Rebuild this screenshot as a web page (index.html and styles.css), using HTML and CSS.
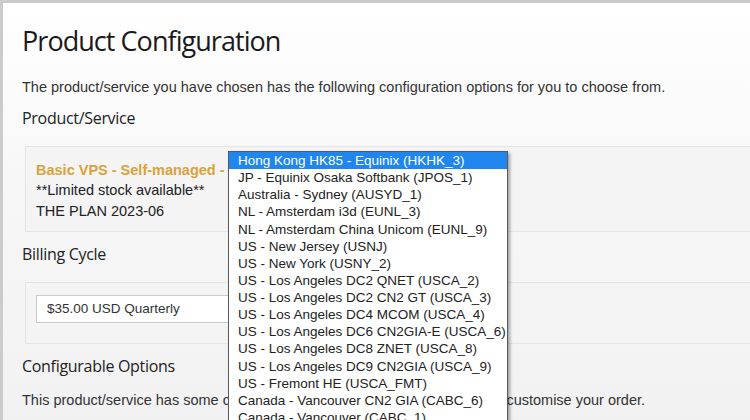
FILE: index.html
```html
<!DOCTYPE html>
<html>
<head>
<meta charset="utf-8">
<link rel="stylesheet" href="styles.css">
</head>
<body>
<div class="frame">
  <div class="content">
    <h1 class="title">Product Configuration</h1>
    <p class="intro">The product/service you have chosen has the following configuration options for you to choose from.</p>
    <h3 class="section">Product/Service</h3>
    <div class="well product">
      <div class="prod-name">Basic VPS - Self-managed - Hong Kong HK85</div>
      <div class="prod-line">**Limited stock available**</div>
      <div class="prod-line">THE PLAN 2023-06</div>
    </div>
    <h3 class="section section-next">Billing Cycle</h3>
    <div class="well billing">
      <div class="select">$35.00 USD Quarterly</div>
    </div>
    <h3 class="section section-next">Configurable Options</h3>
    <p class="intro intro-tight">This product/service has some configurable options that you can choose to customise your order.</p>
  </div>
  <ul class="dropdown">
    <li class="active">Hong Kong HK85 - Equinix (HKHK_3)</li>
    <li>JP - Equinix Osaka Softbank (JPOS_1)</li>
    <li>Australia - Sydney (AUSYD_1)</li>
    <li>NL - Amsterdam i3d (EUNL_3)</li>
    <li>NL - Amsterdam China Unicom (EUNL_9)</li>
    <li>US - New Jersey (USNJ)</li>
    <li>US - New York (USNY_2)</li>
    <li>US - Los Angeles DC2 QNET (USCA_2)</li>
    <li>US - Los Angeles DC2 CN2 GT (USCA_3)</li>
    <li>US - Los Angeles DC4 MCOM (USCA_4)</li>
    <li>US - Los Angeles DC6 CN2GIA-E (USCA_6)</li>
    <li>US - Los Angeles DC8 ZNET (USCA_8)</li>
    <li>US - Los Angeles DC9 CN2GIA (USCA_9)</li>
    <li>US - Fremont HE (USCA_FMT)</li>
    <li>Canada - Vancouver CN2 GIA (CABC_6)</li>
    <li>Canada - Vancouver (CABC_1)</li>
  </ul>
</div>
</body>
</html>
```
FILE: styles.css
```css
html, body {
  margin: 0;
  padding: 0;
  overflow: hidden;
  width: 750px;
  height: 420px;
}
.frame {
  position: relative;
  width: 800px;
  height: 440px;
  border-top: 3px solid #cbcbcb;
  border-left: 3px solid #cbcbcb;
  background: linear-gradient(to bottom, #ffffff 0%, #f7f7f7 40%, #f1f1f1 100%);
  box-sizing: border-box;
}
.content {
  padding: 19px 0 0 19px;
  font-family: "Liberation Sans", Arial, sans-serif;
  color: #222;
}
.title {
  margin: 0;
  font-family: "Open Sans", sans-serif;
  font-weight: 400;
  font-size: 27px;
  line-height: 38px;
  letter-spacing: -0.95px;
  color: #1a1a1a;
}
.intro {
  margin: 17px 0 0;
  font-size: 14.5px;
  line-height: 20px;
  color: #333;
}
.intro-tight {
  margin-top: 13px;
}
.section {
  margin: 10px 0 0;
  font-family: "Open Sans", sans-serif;
  font-weight: 400;
  font-size: 16px;
  line-height: 22px;
  letter-spacing: -0.3px;
  color: #222;
}
.section-next {
  margin-top: 11px;
}
.well {
  margin: 17px 0 0 3px;
  width: 760px;
  background: #f4f4f4;
  border: 1px solid #e4e4e4;
  box-sizing: border-box;
}
.product {
  height: 86px;
  padding: 13px 10px;
}
.prod-name {
  font-size: 14.5px;
  line-height: 20px;
  font-weight: bold;
  color: #d9a23a;
}
.prod-line {
  font-size: 14.5px;
  line-height: 20.5px;
  color: #222;
}
.billing {
  height: 62px;
  padding: 12px 10px;
}
.select {
  width: 400px;
  height: 28px;
  box-sizing: border-box;
  border: 1px solid #cccccc;
  background: #fff;
  padding: 0 10px;
  font-size: 13.5px;
  line-height: 26px;
  color: #333;
}
.dropdown {
  position: absolute;
  left: 225px;
  top: 148px;
  width: 280px;
  margin: 0;
  padding: 0;
  list-style: none;
  background: #fff;
  border: 1px solid #5a5a5a;
  box-shadow: 2px 2px 3px rgba(0, 0, 0, 0.35);
  box-sizing: border-box;
  font-family: "Liberation Sans", Arial, sans-serif;
  font-size: 13.5px;
  color: #222;
}
.dropdown li {
  height: 17.13px;
  line-height: 17px;
  padding-left: 9px;
  white-space: nowrap;
}
.dropdown li.active {
  background: #1e86ee;
  color: #fff;
}
```
